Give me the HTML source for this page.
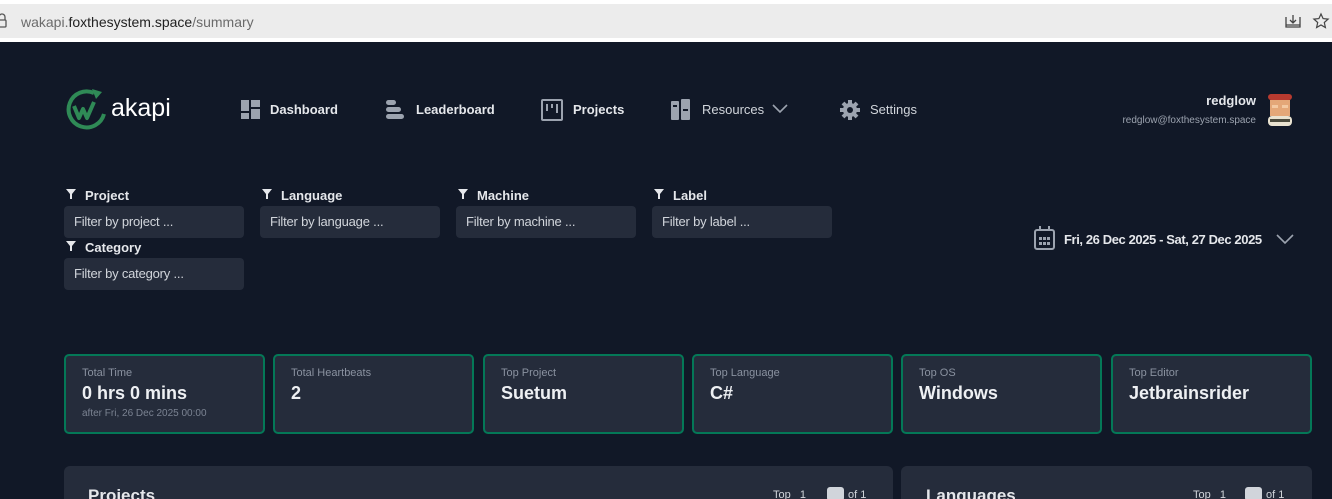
<!DOCTYPE html>
<html><head><meta charset="utf-8"><style>
*{box-sizing:border-box;margin:0;padding:0}
html,body{width:1332px;height:499px;overflow:hidden}
body{background:#111827;font-family:"Liberation Sans",sans-serif;position:relative;color:#e5e7eb}
.abs{position:absolute}
.bar{left:0;top:0;width:1332px;height:42px;background:#fff}
.url{left:0;top:4px;width:1332px;height:34px;background:#ececec}
.nav{font-size:13px;font-weight:bold;color:#e5e7eb;top:102px}
.lab{font-size:13px;font-weight:bold;color:#e5e7eb}
.inp{width:180px;height:32px;background:#252c3b;border-radius:4px;font-size:13px;color:#d1d5db;padding:8px 10px;letter-spacing:-0.2px}
.card{top:354px;width:201px;height:80px;border:2px solid #047857;border-radius:5px;background:#252c3b;padding:11px 16px}
.card .t{font-size:11px;color:#8a92a0}
.card .v{font-size:18px;font-weight:bold;color:#eef0f3;margin-top:4px}
.card .s{font-size:10px;color:#7b8392;margin-top:4px}
.panel{top:466px;height:40px;background:#252c3b;border-radius:6px}
</style></head><body>
<div class="abs bar"></div>
<div class="abs url"></div>
<svg class="abs" style="left:-4px;top:13px" width="12" height="16" viewBox="0 0 12 16"><rect x="1" y="7" width="9" height="7" rx="1" fill="none" stroke="#555" stroke-width="1.3"/><path d="M3 7V4a3 3 0 016 0v3" fill="none" stroke="#555" stroke-width="1.3"/></svg>
<div class="abs" style="left:21px;top:14px;font-size:14px;color:#6b6b6b">wakapi.<span style="color:#222">foxthesystem.space</span>/summary</div>
<svg class="abs" style="left:1284px;top:12px" width="18" height="18" viewBox="0 0 18 18" fill="none" stroke="#444" stroke-width="1.3"><path d="M2 5v10h14V5M9 3v8M6 8l3 3 3-3M2 13h14"/></svg>
<svg class="abs" style="left:1312px;top:12px" width="18" height="18" viewBox="0 0 18 18"><path d="M9 2l2.1 4.6 5 .5-3.8 3.4 1.1 5L9 13l-4.4 2.5 1.1-5L1.9 7.1l5-.5z" fill="none" stroke="#444" stroke-width="1.2"/></svg>

<svg class="abs" style="left:64px;top:88px" width="46" height="44" viewBox="0 0 46 44"><path d="M30 5A18 18 0 1 0 40 26" fill="none" stroke="#2f8a56" stroke-width="4"/><path d="M28 1l10 3-6 7z" fill="#2f8a56"/><path d="M10 18l5 12 4-9 4 9 7-16" fill="none" stroke="#2f8a56" stroke-width="4" stroke-linejoin="round"/></svg>
<div class="abs" style="left:111px;top:94px;font-size:25px;color:#fff">akapi</div>

<svg class="abs" style="left:241px;top:100px" width="19" height="19"><rect x="0" y="0" width="8" height="11" fill="#9ca3af"/><rect x="10" y="0" width="9" height="7" fill="#9ca3af"/><rect x="0" y="13" width="8" height="6" fill="#9ca3af"/><rect x="10" y="9" width="9" height="10" fill="#9ca3af"/></svg>
<div class="abs nav" style="left:270px">Dashboard</div>
<svg class="abs" style="left:386px;top:100px" width="19" height="19"><rect x="0" y="0" width="10" height="5" rx="2.5" fill="#9ca3af"/><rect x="0" y="7" width="15" height="5" rx="2.5" fill="#9ca3af"/><rect x="0" y="14" width="18" height="5" rx="2.5" fill="#9ca3af"/></svg>
<div class="abs nav" style="left:416px">Leaderboard</div>
<svg class="abs" style="left:541px;top:99px" width="22" height="22" fill="none" stroke="#9ca3af" stroke-width="2"><rect x="1" y="1" width="20" height="20" rx="1"/><path d="M6 5v7M11 5v4M16 5v9"/></svg>
<div class="abs nav" style="left:573px">Projects</div>
<svg class="abs" style="left:671px;top:99px" width="20" height="22" fill="#9ca3af"><rect x="0" y="2" width="8" height="19" rx="1"/><rect x="10" y="0" width="9" height="21" rx="1"/><rect x="2" y="6" width="4" height="2" fill="#111827"/><rect x="12" y="10" width="5" height="2" fill="#111827"/></svg>
<div class="abs nav" style="left:702px;font-weight:normal;color:#d1d5db">Resources</div>
<svg class="abs" style="left:772px;top:104px" width="16" height="10" fill="none" stroke="#9ca3af" stroke-width="1.6"><path d="M1 1l7 7 7-7"/></svg>
<svg class="abs" style="left:840px;top:100px" width="20" height="20" viewBox="0 0 20 20"><circle cx="10" cy="10" r="7" fill="#9ca3af"/><g stroke="#9ca3af" stroke-width="4"><path d="M10 0v20M0 10h20M3 3l14 14M17 3L3 17"/></g><circle cx="10" cy="10" r="3" fill="#111827"/></svg>
<div class="abs nav" style="left:870px;font-weight:normal;color:#d1d5db">Settings</div>

<div class="abs" style="right:76px;top:93px;font-size:13px;font-weight:bold;color:#e5e7eb">redglow</div>
<div class="abs" style="right:76px;top:115px;font-size:10px;color:#9ca3af">redglow@foxthesystem.space</div>
<svg class="abs" style="left:1266px;top:94px" width="28" height="32"><rect x="2" y="0" width="24" height="6" rx="3" fill="#b83a2f"/><rect x="4" y="6" width="20" height="16" fill="#e4a778"/><rect x="6" y="11" width="6" height="3" fill="#f3c9a2"/><rect x="16" y="11" width="6" height="3" fill="#f3c9a2"/><rect x="2" y="22" width="24" height="10" rx="4" fill="#e9e2d0"/><rect x="4" y="25" width="20" height="3" fill="#4b4a3c"/></svg>

<svg class="abs" style="left:66px;top:189px" width="10" height="10"><path d="M0 0h10L6 5v5H4V5z" fill="#e5e7eb"/></svg>
<div class="abs lab" style="left:85px;top:188px">Project</div>
<div class="abs inp" style="left:64px;top:206px">Filter by project ...</div>
<svg class="abs" style="left:262px;top:189px" width="10" height="10"><path d="M0 0h10L6 5v5H4V5z" fill="#e5e7eb"/></svg>
<div class="abs lab" style="left:281px;top:188px">Language</div>
<div class="abs inp" style="left:260px;top:206px">Filter by language ...</div>
<svg class="abs" style="left:458px;top:189px" width="10" height="10"><path d="M0 0h10L6 5v5H4V5z" fill="#e5e7eb"/></svg>
<div class="abs lab" style="left:477px;top:188px">Machine</div>
<div class="abs inp" style="left:456px;top:206px">Filter by machine ...</div>
<svg class="abs" style="left:654px;top:189px" width="10" height="10"><path d="M0 0h10L6 5v5H4V5z" fill="#e5e7eb"/></svg>
<div class="abs lab" style="left:673px;top:188px">Label</div>
<div class="abs inp" style="left:652px;top:206px">Filter by label ...</div>
<svg class="abs" style="left:66px;top:241px" width="10" height="10"><path d="M0 0h10L6 5v5H4V5z" fill="#e5e7eb"/></svg>
<div class="abs lab" style="left:85px;top:240px">Category</div>
<div class="abs inp" style="left:64px;top:258px">Filter by category ...</div>

<svg class="abs" style="left:1034px;top:226px" width="21" height="24" fill="none" stroke="#9ca3af" stroke-width="2"><rect x="1" y="4" width="19" height="19" rx="2"/><path d="M6 0v5M15 0v5"/><g fill="#9ca3af" stroke="none"><rect x="5" y="11" width="3" height="3"/><rect x="9" y="11" width="3" height="3"/><rect x="13" y="11" width="3" height="3"/><rect x="5" y="16" width="3" height="3"/><rect x="9" y="16" width="3" height="3"/><rect x="13" y="16" width="3" height="3"/></g></svg>
<div class="abs" style="left:1064px;top:232px;font-size:13px;font-weight:bold;color:#e5e7eb;letter-spacing:-0.4px">Fri, 26 Dec 2025 - Sat, 27 Dec 2025</div>
<svg class="abs" style="left:1276px;top:234px" width="18" height="11" fill="none" stroke="#9ca3af" stroke-width="1.6"><path d="M1 1l8 8 8-8"/></svg>

<div class="abs card" style="left:64px"><div class="t">Total Time</div><div class="v">0 hrs 0 mins</div><div class="s">after Fri, 26 Dec 2025 00:00</div></div>
<div class="abs card" style="left:273px"><div class="t">Total Heartbeats</div><div class="v">2</div></div>
<div class="abs card" style="left:483px"><div class="t">Top Project</div><div class="v">Suetum</div></div>
<div class="abs card" style="left:692px"><div class="t">Top Language</div><div class="v">C#</div></div>
<div class="abs card" style="left:901px"><div class="t">Top OS</div><div class="v">Windows</div></div>
<div class="abs card" style="left:1111px"><div class="t">Top Editor</div><div class="v">Jetbrainsrider</div></div>

<div class="abs panel" style="left:64px;width:829px"></div>
<div class="abs panel" style="left:901px;width:411px"></div>
<div class="abs" style="left:88px;top:486px;font-size:17px;font-weight:bold;color:#e5e7eb">Projects</div>
<div class="abs" style="left:926px;top:486px;font-size:17px;font-weight:bold;color:#e5e7eb">Languages</div>
<div class="abs" style="left:773px;top:489px;font-size:11px;color:#d1d5db">Top &nbsp; 1</div>
<div class="abs" style="left:827px;top:487px;width:17px;height:14px;background:#d1d5db;border-radius:3px"></div>
<div class="abs" style="left:848px;top:489px;font-size:11px;color:#d1d5db">of 1</div>
<div class="abs" style="left:1193px;top:489px;font-size:11px;color:#d1d5db">Top &nbsp; 1</div>
<div class="abs" style="left:1245px;top:487px;width:17px;height:14px;background:#d1d5db;border-radius:3px"></div>
<div class="abs" style="left:1266px;top:489px;font-size:11px;color:#d1d5db">of 1</div>
</body></html>
